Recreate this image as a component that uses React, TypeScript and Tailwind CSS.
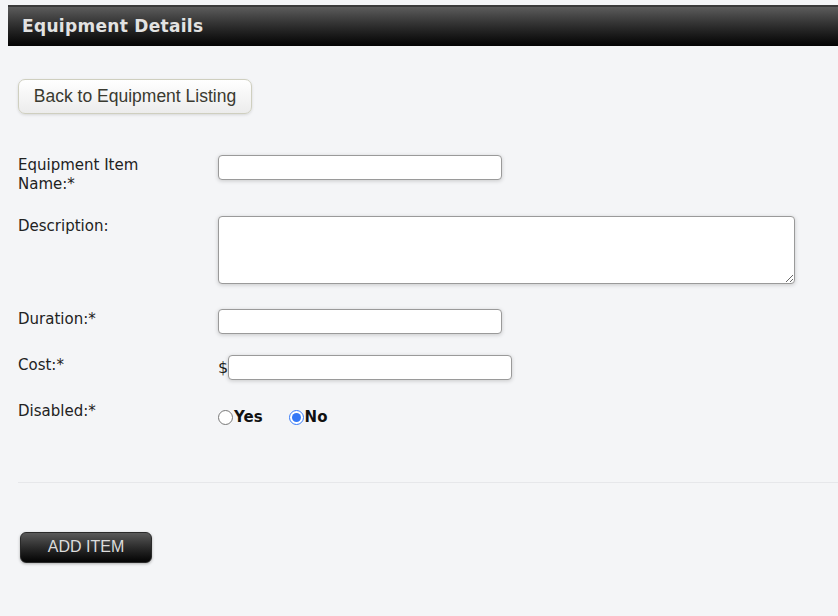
export default function App() {
  const label = "w-[200px] shrink-0 text-[15px] leading-[19px] text-[#222]";
  const input =
    "h-[25px] rounded-[4px] border border-[#9a9a9a] bg-white shadow-[0_1px_4px_rgba(0,0,0,0.18)] outline-none";

  return (
    <div className="min-h-[616px] w-[838px] overflow-hidden bg-[#f4f5f7] font-['DejaVu_Sans',sans-serif]">
      <div className="pt-[5px] pl-[8px]">
        <div className="h-[41px] border-t-2 border-[#3a3a3a] bg-gradient-to-b from-[#5c5c5c] to-[#050505] pl-[14px] flex items-center">
          <h1 className="text-[17px] font-bold text-[#e2e2e2] tracking-[0.3px]">Equipment Details</h1>
        </div>
      </div>

      <div className="px-[18px]">
        <button className="mt-[33px] h-[35px] w-[234px] rounded-[7px] border border-[#cfcfbf] bg-gradient-to-b from-white to-[#ececec] font-['Liberation_Sans',sans-serif] text-[17.5px] text-[#3a3a30] shadow-[0_1px_3px_rgba(0,0,0,0.12)]">
          Back to Equipment Listing
        </button>

        <div className="mt-[41px] flex flex-col">
          <div className="flex h-[61px]">
            <div className={`${label} pt-[1px]`}>
              Equipment Item
              <br />
              Name:*
            </div>
            <input className={`${input} w-[284px]`} />
          </div>

          <div className="flex h-[93px]">
            <div className={`${label} pt-[1px]`}>Description:</div>
            <textarea className="h-[68px] w-[577px] resize-y rounded-[4px] border border-[#9a9a9a] bg-white shadow-[0_1px_4px_rgba(0,0,0,0.18)] outline-none" />
          </div>

          <div className="flex h-[46px]">
            <div className={`${label} pt-[1px]`}>Duration:*</div>
            <input className={`${input} w-[284px]`} />
          </div>

          <div className="flex h-[46px] items-start">
            <div className={`${label} pt-[1px]`}>Cost:*</div>
            <div className="flex items-center">
              <span className="text-[16px] text-[#222]">$</span>
              <input className={`${input} w-[284px]`} />
            </div>
          </div>

          <div className="flex">
            <div className={`${label} pt-[1px]`}>Disabled:*</div>
            <div className="flex items-center pt-[5px] text-[15px] font-bold text-[#111]">
              <label className="flex items-center">
                <input type="radio" name="disabled" className="m-0 h-[15px] w-[15px]" />
                <span className="ml-[1px]">Yes</span>
              </label>
              <label className="ml-[26px] flex items-center">
                <input type="radio" name="disabled" defaultChecked className="m-0 h-[15px] w-[15px] accent-[#3478f6]" />
                <span className="ml-[1px]">No</span>
              </label>
            </div>
          </div>
        </div>

        <div className="mt-[53px] mr-[-18px] border-t border-[#e6e7ea]" />

        <button className="ml-[2px] mt-[49px] h-[31px] w-[132px] rounded-[6px] border border-[#2a2a2a] bg-gradient-to-b from-[#5a5a5a] to-[#050505] font-['Liberation_Sans',sans-serif] text-[16px] text-[#dcdcdc] shadow-[0_1px_3px_rgba(0,0,0,0.3)]">
          ADD ITEM
        </button>
      </div>
    </div>
  );
}
